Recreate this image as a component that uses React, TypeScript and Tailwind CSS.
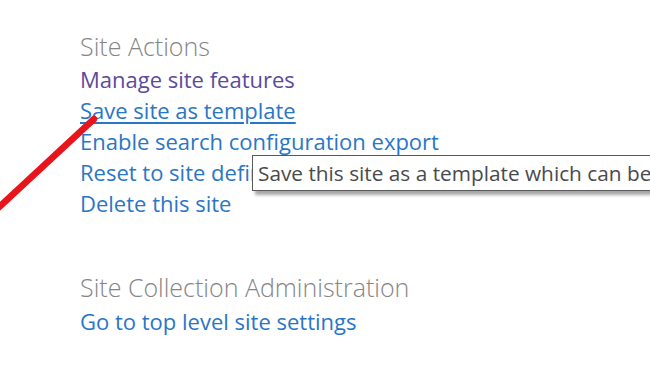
const links = [
  { label: "Manage site features", visited: true },
  { label: "Save site as template", underline: true },
  { label: "Enable search configuration export" },
  { label: "Reset to site definition" },
  { label: "Delete this site" },
];

export default function App() {
  return (
    <div
      className="relative h-[380px] w-[650px] overflow-hidden bg-white"
      style={{ fontFamily: '"Open Sans", "Noto Sans", sans-serif' }}
    >
      <div className="flex flex-col pl-[80px] pt-[31px]">
        <h2 className="text-[25px] leading-[31px] font-light text-[#858585]">Site Actions</h2>
        <div className="mt-[2px] flex flex-col">
          {links.map((l) => (
            <a
              key={l.label}
              className={`text-[22px] leading-[31px] ${l.visited ? "text-[#5c4a9c]" : "text-[#2a76c6]"} ${l.underline ? "underline decoration-[#2a76c6] underline-offset-[3px]" : ""}`}
            >
              {l.label}
            </a>
          ))}
        </div>
        <h2 className="mt-[53px] text-[25px] leading-[31px] font-light text-[#858585]">
          Site Collection Administration
        </h2>
        <a className="mt-[3px] text-[22px] leading-[31px] text-[#2a76c6]">Go to top level site settings</a>
      </div>

      <div className="absolute left-[252px] top-[155px] w-[430px] border border-[#5a5a5a] bg-white pl-[5px] text-[20.8px] leading-[34px] text-[#4a4a4a] shadow-[3px_4px_3px_rgba(0,0,0,0.35)]">
        Save this site as a template which can be
      </div>

      <svg className="absolute left-0 top-0" width="650" height="380">
        <line x1="94" y1="119" x2="-4" y2="210" stroke="#e8141b" strokeWidth="6.5" strokeLinecap="round" />
      </svg>
    </div>
  );
}
